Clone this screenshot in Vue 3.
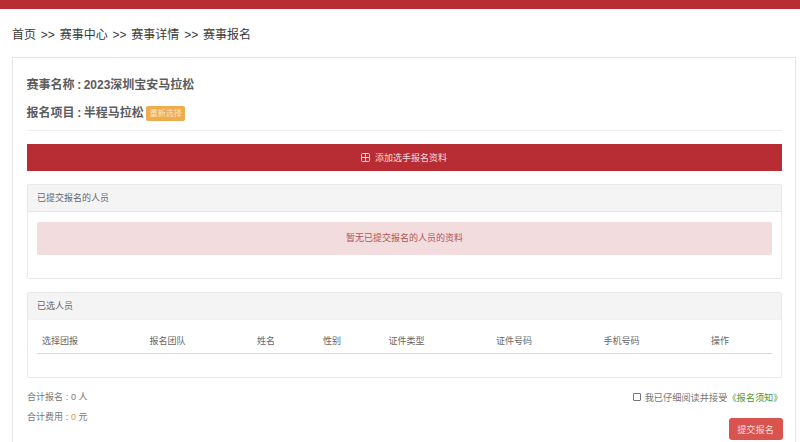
<script setup>
const columns = [
  { label: '选择团报', width: '107.5px' },
  { label: '报名团队', width: '107.5px' },
  { label: '姓名', width: '66px' },
  { label: '性别', width: '65.5px' },
  { label: '证件类型', width: '107.5px' },
  { label: '证件号码', width: '107.5px' },
  { label: '手机号码', width: '107.5px' },
  { label: '操作', width: '65px' }
]
</script>

<template>
  <div class="page">
    <div class="topbar"></div>
    <nav class="crumbs">首页 &gt;&gt; 赛事中心 &gt;&gt; 赛事详情 &gt;&gt; 赛事报名</nav>
    <main class="card">
      <div class="info">
        <div class="info-row">赛事名称 : 2023深圳宝安马拉松</div>
        <div class="info-row second">报名项目 : 半程马拉松<span class="tag">重新选择</span></div>
      </div>
      <button class="add-btn" type="button">
        <svg class="add-icon" viewBox="0 0 9 9" width="9" height="9" aria-hidden="true">
          <rect x="0.5" y="0.5" width="8" height="8" rx="1" fill="none" stroke="currentColor" />
          <path d="M4.5 1v7M1 4.5h7" fill="none" stroke="currentColor" />
        </svg>
        添加选手报名资料
      </button>
      <section class="panel first-panel">
        <header class="panel-head">已提交报名的人员</header>
        <div class="panel-body">
          <div class="alert">暂无已提交报名的人员的资料</div>
        </div>
      </section>
      <section class="panel second-panel">
        <header class="panel-head">已选人员</header>
        <div class="panel-body table-body">
          <div class="thead">
            <span v-for="col in columns" :key="col.label" class="th" :style="{ width: col.width }">{{ col.label }}</span>
          </div>
        </div>
      </section>
      <footer class="summary">
        <div class="totals">
          <div>合计报名 : 0 人</div>
          <div class="fee">合计费用 : <span class="orange">0</span> 元</div>
        </div>
        <div class="submit-col">
          <label class="agree"><span class="box"></span>我已仔细阅读并接受<span class="notice">《报名须知》</span></label>
          <button class="submit" type="button">提交报名</button>
        </div>
      </footer>
    </main>
  </div>
</template>

<style>
html, body { margin: 0; background: #fff; overflow: hidden; }
</style>

<style scoped>
.page {
  width: 800px;
  height: 442px;
  overflow: hidden;
  background: #fff;
  font-family: "Liberation Sans", "Noto Sans CJK SC", sans-serif;
  color: #555;
}
.topbar { height: 9px; background: #b82c33; }
.crumbs {
  height: 48px;
  box-sizing: border-box;
  padding: 18px 0 0 12px;
  font-size: 12px;
  line-height: 16px;
  word-spacing: 1.5px;
  color: #3a3a3a;
}
.card {
  margin-left: 12px;
  width: 783.5px;
  height: 400px;
  box-sizing: border-box;
  border: 1px solid #e6e6e6;
  padding: 0 13px 0 14px;
}
.info {
  height: 73px;
  width: 755px;
  box-sizing: border-box;
  padding-top: 19px;
  border-bottom: 1px solid #eee;
  font-size: 12px;
  font-weight: 700;
  color: #5c5c5c;
  word-spacing: -0.8px;
}
.info-row { line-height: 17px; margin-left: -0.4px; }
.info-row.second { margin-top: 11px; display: flex; align-items: center; }
.tag {
  margin-left: 2.5px;
  margin-top: -1px;
  width: 39px;
  height: 15px;
  border-radius: 2px;
  background: #eeac4c;
  color: #fbe6c6;
  font-size: 8px;
  font-weight: 400;
  line-height: 15px;
  text-align: center;
}
.add-btn {
  display: flex;
  align-items: center;
  justify-content: center;
  gap: 5px;
  width: 755px;
  height: 27px;
  margin-top: 13px;
  padding: 0 1px 0 0;
  border: 0;
  background: #b82c33;
  color: #f6dcdc;
  font: 9px "Liberation Sans", "Noto Sans CJK SC", sans-serif;
}
.add-icon { flex: none; }
.panel {
  width: 755px;
  box-sizing: border-box;
  border: 1px solid #e9e9e9;
  border-radius: 2px;
}
.first-panel { margin-top: 13px; height: 95px; }
.second-panel { margin-top: 13px; height: 86px; }
.panel-head {
  height: 27px;
  box-sizing: border-box;
  padding-left: 9px;
  background: #f4f4f4;
  border-bottom: 1px solid #e6e6e6;
  font-size: 9px;
  line-height: 27px;
  color: #666;
}
.second-panel .panel-head { border-bottom-color: #f1f1f1; }
.panel-body { padding: 10px 9px; }
.alert {
  height: 33px;
  border-radius: 2px;
  background: #f2dcde;
  color: #b0545a;
  font-size: 9px;
  line-height: 33px;
  text-align: center;
}
.table-body { padding-top: 7px; }
.thead {
  display: flex;
  height: 27px;
  box-sizing: border-box;
  border-bottom: 1px solid #d9d9d9;
  padding-left: 5px;
  font-size: 9px;
  line-height: 28px;
  color: #666;
}
.th { flex: none; font-weight: 400; }
.summary {
  display: flex;
  justify-content: space-between;
  width: 755.5px;
  margin-top: 12px;
  font-size: 9px;
  color: #777;
}
.totals { line-height: 14px; word-spacing: 0.2px; }
.fee { margin-top: 6px; }
.orange { color: #e8923c; }
.submit-col { display: flex; flex-direction: column; align-items: flex-end; }
.agree { display: flex; align-items: center; height: 14px; font-size: 9.2px; color: #777; }
.box {
  width: 6px;
  height: 6px;
  margin-right: 4px;
  border: 1px solid #777;
  border-radius: 1px;
}
.notice { color: #4c9a3c; }
.submit {
  width: 54px;
  height: 22px;
  margin-top: 14px;
  padding: 0;
  border: 0;
  border-radius: 3px;
  background: #d9534f;
  color: #f9dedc;
  font: 9.2px "Liberation Sans", "Noto Sans CJK SC", sans-serif;
}
</style>
